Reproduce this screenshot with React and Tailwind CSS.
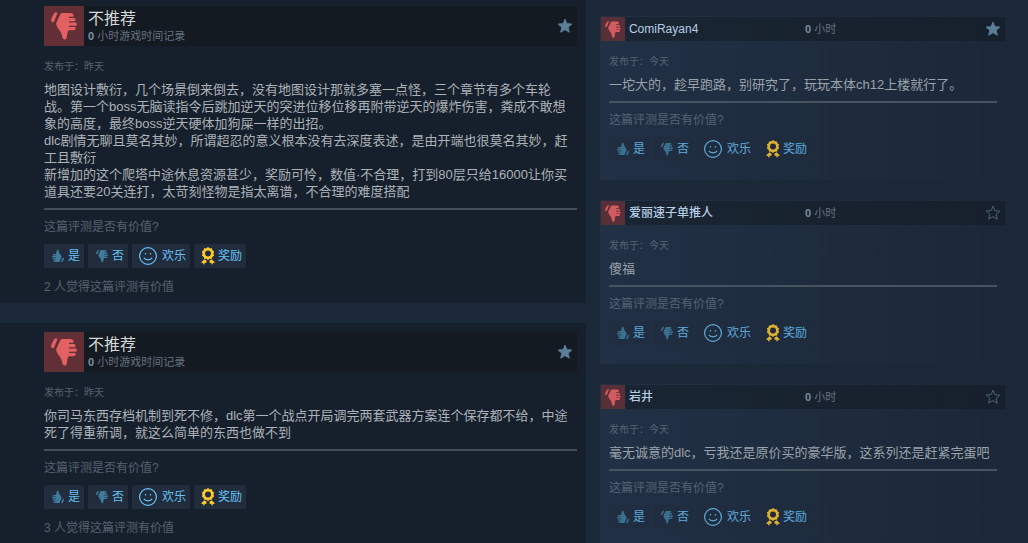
import React from 'react';
import clsx from 'clsx';

const featured = [
  {
    id: 1,
    date: '昨天',
    favorite: true,
    helpful: 2,
    paragraphs: [
      '地图设计敷衍，几个场景倒来倒去，没有地图设计那就多塞一点怪，三个章节有多个车轮战。第一个boss无脑读指令后跳加逆天的突进位移位移再附带逆天的爆炸伤害，粪成不敢想象的高度，最终boss逆天硬体加狗屎一样的出招。',
      'dlc剧情无聊且莫名其妙，所谓超忍的意义根本没有去深度表述，是由开端也很莫名其妙，赶工且敷衍',
      '新增加的这个爬塔中途休息资源甚少，奖励可怜，数值·不合理，打到80层只给16000让你买道具还要20关连打，太苛刻怪物是指太离谱，不合理的难度搭配',
    ],
  },
  {
    id: 2,
    date: '昨天',
    favorite: true,
    helpful: 3,
    paragraphs: ['你司马东西存档机制到死不修，dlc第一个战点开局调完两套武器方案连个保存都不给，中途死了得重新调，就这么简单的东西也做不到'],
  },
];

const recent = [
  { id: 3, name: 'ComiRayan4', favorite: true, text: '一坨大的，趁早跑路，别研究了，玩玩本体ch12上楼就行了。' },
  { id: 4, name: '爱丽速子单推人', favorite: false, text: '傻福' },
  { id: 5, name: '岩井', favorite: false, text: '毫无诚意的dlc，亏我还是原价买的豪华版，这系列还是赶紧完蛋吧' },
];

const Thumb = ({ className }) => (
  <svg viewBox="0 0 26 28" fill="currentColor" className={className} aria-hidden="true">
    <path d="M3.600.8Q4.600-.2 5.800.5 6.600 1.100 6 2.200L3.200 9.200Q2.600 10.400 1.200 9.900-.2 9.300.1 7.700 1.100 4 3.600.8z" />
    <path d="M9.400 2.200C9.900 1.300 10.500 1 11.500 1h7.700c2.200 0 3.400 1 3.400 2.400 0 .6-.2 1-.6 1.400h-4v1.200h5.200c.9.500 1.300 1.100 1.300 1.800 0 .7-.3 1.200-.8 1.500H18v1.200h6.900c.7.5 1 1 1 1.800 0 .7-.3 1.200-.8 1.500H18v1.200h6.200c.3.400.4.800.4 1.200 0 1.400-1.100 2.100-2.600 2.100h-4.400c-1 1.600-1.500 4.200-1.700 6.400-.2 1.800-.9 2.800-2.100 2.800-1.500 0-2.200-1-2.500-2.700-.5-2.500-1.100-4-2.300-5.900C7.900 17.500 6.500 15.700 5.500 13.300c-.6-1.500-.1-2.800.6-4.400z" />
  </svg>
);

const Star = ({ filled }) => (
  <svg viewBox="0 0 16 16" className={clsx('size-4', filled ? 'text-[#5b7f99]' : 'text-[#4b6075]')} aria-hidden="true">
    <path
      d="M8 1.200l1.900 4.500 4.900.4-3.700 3.200 1.200 4.900L8 11.600l-4.300 2.600 1.200-4.900L1.200 6.100l4.900-.4z"
      fill={filled ? 'currentColor' : 'none'}
      stroke="currentColor"
      strokeWidth="1"
    />
  </svg>
);

const Smile = () => (
  <svg viewBox="0 0 18 18" fill="none" stroke="currentColor" className="size-[18px]" aria-hidden="true">
    <circle cx="9" cy="9" r="8.400" strokeWidth="1.200" />
    <path d="M4.800 10.800c1.500 2.800 6.900 2.800 8.400 0" strokeWidth="1.200" />
    <path d="M6.500 6v1.600M11.500 6v1.600" strokeWidth="1.200" />
  </svg>
);

const Award = () => (
  <svg viewBox="0 0 14 18" fill="#ffc82c" className="h-[18px] w-[14px]" aria-hidden="true">
    <path
      fillRule="evenodd"
      d="M7 0l1.700 1.200 2.100 0 .7 2L13.100 4.500 12.500 6.500l.6 2-1.600 1.200-.7 2H8.700L7 12.900l-1.700-1.200H3.200l-.7-2L.9 8.500l.6-2-.6-2 1.600-1.300.7-2h2.100zM7 3.400a3 3 0 1 0 0 6 3 3 0 0 0 0-6z"
    />
    <path d="M3.300 12.200l2.400 1.600-.5 2.200-1.400-.3L3 18l-1.100-2.100L0 15.500z" />
    <path d="M10.700 12.200l-2.400 1.600.5 2.200 1.400-.3L11 18l1.100-2.100 1.900-.4z" />
  </svg>
);

const VoteButton = ({ className, compact, children }) => (
  <button
    type="button"
    className={clsx(
      'flex h-6 items-center rounded-xs text-xs text-[#67c1f5]',
      compact ? 'bg-[#212c3d]/50' : 'bg-[#212c3d]',
      className
    )}
  >
    {children}
  </button>
);

const VoteBar = ({ compact }) => (
  <div className={clsx('flex gap-1', compact && 'opacity-85')}>
    <VoteButton compact={compact} className="w-10 gap-1 pl-2">
      <Thumb className="h-[14px] w-3 rotate-180 text-[#417a9b]" />是
    </VoteButton>
    <VoteButton compact={compact} className="w-10 gap-1 pl-2">
      <Thumb className="h-[14px] w-3 text-[#417a9b]" />否
    </VoteButton>
    <VoteButton compact={compact} className="w-[58px] gap-[5px] pl-[7px]">
      <Smile />欢乐
    </VoteButton>
    <VoteButton compact={compact} className="w-[52px] gap-[3px] pl-[7px]">
      <Award />奖励
    </VoteButton>
  </div>
);

const FavoriteButton = ({ filled }) => (
  <button type="button" aria-label="收藏" aria-pressed={filled} className="ml-auto mr-1">
    <Star filled={filled} />
  </button>
);

const FeaturedReview = ({ review }) => (
  <article className="bg-[#16202c] pt-[9px] pr-[9px] pb-[6px] pl-11 first:pt-[6px] last:grow">
    <header className="flex h-10 items-center bg-[#131a22]">
      <div className="flex size-10 items-center justify-center bg-[#632f36]">
        <Thumb className="h-7 w-[26px] text-[#e36162]" />
      </div>
      <div className="pl-1">
        <h2 className="text-base leading-5 text-[#d6d7d8]">不推荐</h2>
        <p className="text-[11px] leading-[14px] text-[#66727f]">
          <b className="text-[#8091a2]">0</b> 小时游戏时间记录
        </p>
      </div>
      <FavoriteButton filled={review.favorite} />
    </header>
    <p className="mt-[14px] text-[10px] leading-[14px] text-[#56616e]">发布于：{review.date}</p>
    <div className="mt-[7px] pr-2 text-[13px] leading-[17px] text-[#acb2b8]">
      {review.paragraphs.map((text, index) => (
        <p key={index}>{text}</p>
      ))}
    </div>
    <hr className="mt-2 mb-[7px] border-t-2 border-[#464d58]" />
    <p className="text-xs leading-5 text-[#56616e]">这篇评测是否有价值?</p>
    <div className="mt-[7px]">
      <VoteBar />
    </div>
    <p className="mt-[9px] text-xs leading-5 text-[#56616e]">{review.helpful} 人觉得这篇评测有价值</p>
  </article>
);

const RecentReview = ({ review }) => (
  <article className="bg-linear-to-r from-[#213045] to-[#1b2838] pt-px pb-[19px] pl-px last:pb-[14px]">
    <header className="flex h-6 items-center bg-linear-to-r from-[#1a2533] to-[#16202c]">
      <div className="flex size-6 items-center justify-center bg-[#592f37]">
        <Thumb className="h-[17px] w-4 text-[#d05c60]" />
      </div>
      <div className="grid flex-1 grid-cols-[176px_1fr] items-center pl-1 leading-4">
        <a href="#" className="text-xs leading-4 font-medium text-[#b5cde5]">{review.name}</a>
        <p className="text-[11px] leading-4 text-[#66727f]">
          <b className="text-[#7d8c9c]">0</b> 小时
        </p>
      </div>
      <FavoriteButton filled={review.favorite} />
    </header>
    <div className="pr-2 pl-2">
      <p className="mt-[14px] text-[10px] leading-[14px] text-[#556373]">发布于：今天</p>
      <p className="mt-[7px] text-[13px] leading-[17px] text-[#9aa2aa]">{review.text}</p>
      <hr className="mt-2 mb-[7px] border-t-2 border-[#475361]" />
      <p className="text-xs leading-5 text-[#556373]">这篇评测是否有价值?</p>
      <div className="mt-[7px]">
        <VoteBar compact />
      </div>
    </div>
  </article>
);

const App = () => (
  <main className="grid min-h-screen grid-cols-[57%_43%] bg-[#1b2838] font-['Liberation_Sans','Noto_Sans_CJK_SC',sans-serif]">
    <section className="flex flex-col gap-5">
      {featured.map((review) => (
        <FeaturedReview key={review.id} review={review} />
      ))}
    </section>
    <section className="flex flex-col gap-5 pt-4 pr-[23px] pl-[14px]">
      {recent.map((review) => (
        <RecentReview key={review.id} review={review} />
      ))}
    </section>
  </main>
);

export default App;
